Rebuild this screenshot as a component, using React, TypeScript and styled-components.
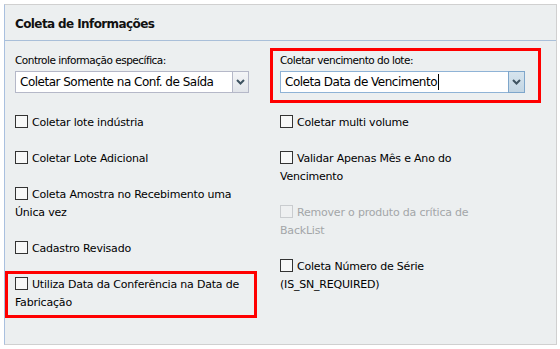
import React from "react";
import styled, { createGlobalStyle } from "styled-components";

const Global = createGlobalStyle`
  html, body { margin: 0; padding: 0; background: #ffffff; }
  body { font-family: "DejaVu Sans", Tahoma, sans-serif; color: #000; }
`;

const Panel = styled.section`
  margin: 4px;
  width: 553px;
  height: 341px;
  box-sizing: border-box;
  background: #eceff0;
  border: 1px solid #d0d0d0;
  border-left-color: #a9c0df;
`;

const Header = styled.header`
  height: 36px;
  box-sizing: border-box;
  padding: 2px 0 0 10px;
  border-bottom: 1px solid #a9bfd9;
  display: flex;
  align-items: center;
  font-size: 12px;
  font-weight: bold;
  letter-spacing: -0.6px;
  color: #111;
`;

const Body = styled.div`
  padding: 12px 30px 0 10px;
  display: grid;
  grid-template-columns: 240px 245px;
  column-gap: 25px;
`;

const Column = styled.div`
  display: flex;
  flex-direction: column;
`;

const Field = styled.div<{ $flush?: boolean }>`
  display: flex;
  flex-direction: column;
  gap: 4px;
  margin-bottom: ${(p) => (p.$flush ? 0 : 21)}px;
`;

const Highlight = styled.div<{ $m: string; $p: string }>`
  border: 3px solid #ff0000;
  margin: ${(p) => p.$m};
  padding: ${(p) => p.$p};
`;

const Label = styled.label`
  font-size: 10.5px;
  line-height: 14px;
  letter-spacing: -0.5px;
  white-space: nowrap;
`;

const Combo = styled.div<{ $w: number }>`
  display: flex;
  width: ${(p) => p.$w}px;
  height: 22px;
  box-sizing: border-box;
`;

const Input = styled.div<{ $focus?: boolean }>`
  flex: 1;
  background: #fff;
  border: 1px solid ${(p) => (p.$focus ? "#8fb3d6" : "#b5b8c8")};
  border-right: none;
  padding-left: 4px;
  display: flex;
  align-items: center;
  font-size: 12px;
  letter-spacing: -0.5px;
  white-space: nowrap;
  overflow: hidden;
`;

const Caret = styled.span`
  display: inline-block;
  width: 1px;
  height: 16px;
  background: #000;
  margin-left: 1px;
`;

const Trigger = styled.div<{ $focus?: boolean }>`
  width: 17px;
  box-sizing: border-box;
  border: 1px solid ${(p) => (p.$focus ? "#7ea6cb" : "#b5b8c8")};
  background: ${(p) =>
    p.$focus
      ? "linear-gradient(#d6e4ee, #c3d6e4)"
      : "linear-gradient(#f4f5f7, #e2e5ea)"};
  display: flex;
  align-items: center;
  justify-content: center;
`;

const Chevron = () => (
  <svg width="9" height="6" viewBox="0 0 9 6">
    <path d="M1 1 L4.5 4.5 L8 1" fill="none" stroke="#3e5361" strokeWidth="2" />
  </svg>
);

const Check = styled.label<{ $disabled?: boolean; $last?: boolean }>`
  display: block;
  max-width: 230px;
  font-size: 11px;
  line-height: 18px;
  letter-spacing: -0.2px;
  margin-bottom: ${(p) => (p.$last ? 0 : 18)}px;
  color: ${(p) => (p.$disabled ? "#a3a6a8" : "#000")};
`;

const Box = styled.span<{ $disabled?: boolean }>`
  display: inline-block;
  width: 13px;
  height: 13px;
  box-sizing: border-box;
  border: 1px solid ${(p) => (p.$disabled ? "#c9cccf" : "#333")};
  background: ${(p) => (p.$disabled ? "#eef0f1" : "#f7f8f8")};
  vertical-align: -2px;
  margin-right: 4px;
`;

const CheckItem = ({
  children,
  disabled,
  last,
}: {
  children: React.ReactNode;
  disabled?: boolean;
  last?: boolean;
}) => (
  <Check $disabled={disabled} $last={last}>
    <Box $disabled={disabled} />
    {children}
  </Check>
);

export default function App() {
  return (
    <>
      <Global />
      <Panel>
        <Header>Coleta de Informações</Header>
        <Body>
          <Column>
            <Field>
              <Label>Controle informação específica:</Label>
              <Combo $w={234}>
                <Input>Coletar Somente na Conf. de Saída</Input>
                <Trigger>
                  <Chevron />
                </Trigger>
              </Combo>
            </Field>
            <CheckItem>Coletar lote indústria</CheckItem>
            <CheckItem>Coletar Lote Adicional</CheckItem>
            <CheckItem>Coleta Amostra no Recebimento uma Única vez</CheckItem>
            <CheckItem>Cadastro Revisado</CheckItem>
            <Highlight $m="-5px -2px 0 -10px" $p="2px 0 3px 7px">
              <CheckItem last>
                Utiliza Data da Conferência na Data de Fabricação
              </CheckItem>
            </Highlight>
          </Column>
          <Column>
            <Highlight $m="-5px -16px 11px -10px" $p="2px 13px 7px 7px">
              <Field $flush>
                <Label>Coletar vencimento do lote:</Label>
                <Combo $w={245}>
                  <Input $focus>
                    Coleta Data de Vencimento
                    <Caret />
                  </Input>
                  <Trigger $focus>
                    <Chevron />
                  </Trigger>
                </Combo>
              </Field>
            </Highlight>
            <CheckItem>Coletar multi volume</CheckItem>
            <CheckItem>Validar Apenas Mês e Ano do Vencimento</CheckItem>
            <CheckItem disabled>Remover o produto da crítica de BackList</CheckItem>
            <CheckItem>Coleta Número de Série (IS_SN_REQUIRED)</CheckItem>
          </Column>
        </Body>
      </Panel>
    </>
  );
}
